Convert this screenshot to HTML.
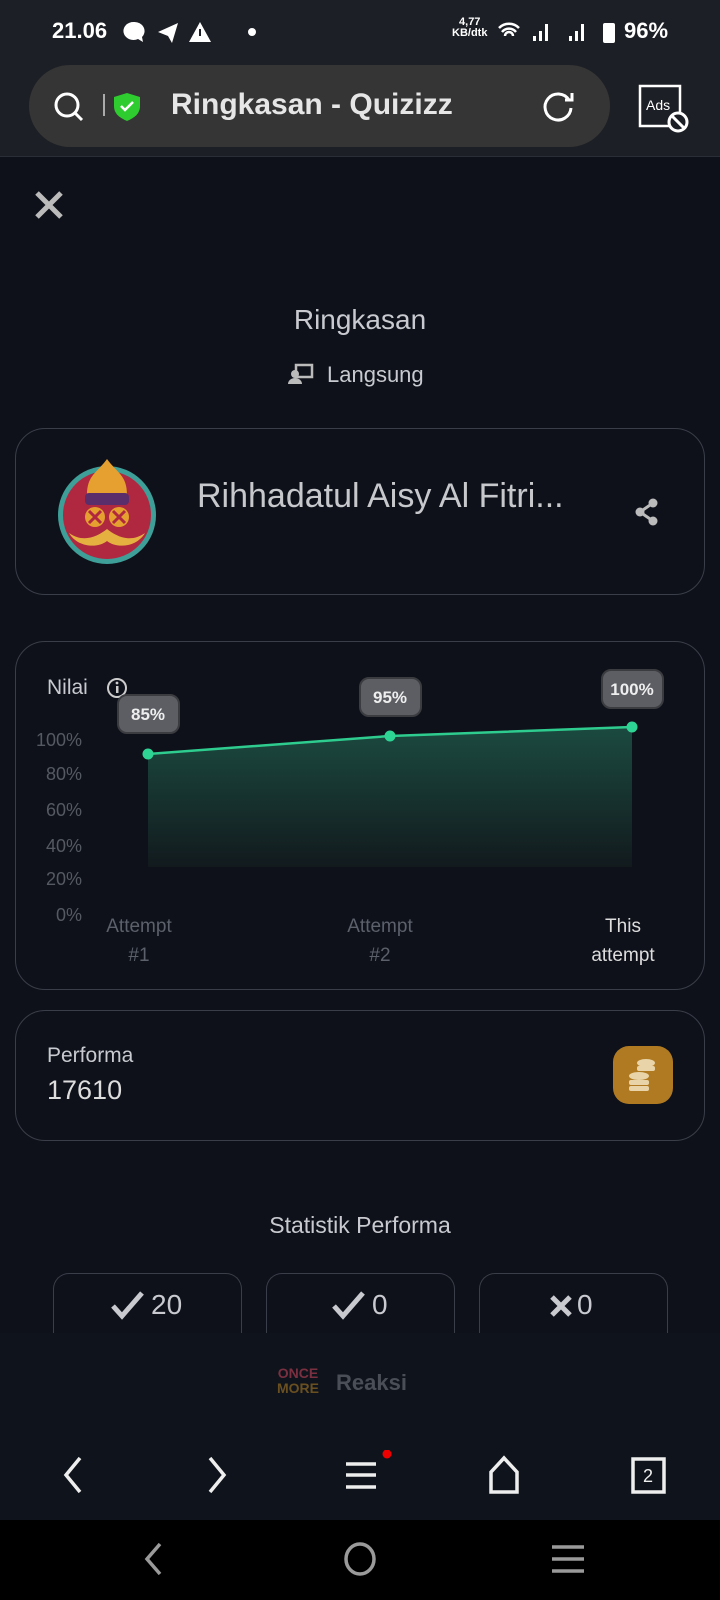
<!DOCTYPE html>
<html><head><meta charset="utf-8"><style>
*{margin:0;padding:0;box-sizing:border-box}
body{width:720px;height:1600px;background:#0e111a;font-family:"Liberation Sans",sans-serif;color:#ddd;position:relative;overflow:hidden}
.a{position:absolute}
.card{position:absolute;border:1.5px solid #3a3e48;border-radius:30px}
.t{color:#c8cad0}
</style></head><body>
<div class="a" style="left:0;top:0;width:720px;height:157px;background:#1c1f25;border-bottom:1px solid #2a2e36"></div>
<div class="a" style="left:52px;top:18px;font-size:22px;font-weight:bold;color:#fff">21.06</div>
<svg class="a" style="left:122px;top:20px" width="140" height="24" viewBox="0 0 140 24">
<path d="M12 2a10 9 0 1 0 4 17l5 3-1-5a10 9 0 0 0-8-15z" fill="#fff"/>
<path d="M36 12l20-9-6 20-4-7z" fill="#fff"/>
<path d="M78 2l11 20H67z" fill="#fff"/><rect x="77" y="9" width="2" height="7" fill="#1c1f25"/>
<circle cx="130" cy="12" r="4" fill="#fff"/></svg>
<div class="a" style="left:452px;top:17px;font-size:11px;font-weight:bold;color:#fff;line-height:11px;text-align:center">4,77<br>KB/dtk</div>
<svg class="a" style="left:497px;top:20px" width="120" height="24" viewBox="0 0 120 24">
<path d="M2 8a14 14 0 0 1 20 0M5 12a9 9 0 0 1 14 0M8 16a4 4 0 0 1 8 0" stroke="#fff" stroke-width="2.5" fill="none"/>
<rect x="36" y="16" width="3" height="5" fill="#fff"/><rect x="42" y="11" width="3" height="10" fill="#fff"/><rect x="48" y="4" width="3" height="17" fill="#fff"/>
<rect x="72" y="16" width="3" height="5" fill="#fff"/><rect x="78" y="11" width="3" height="10" fill="#fff"/><rect x="84" y="4" width="3" height="17" fill="#fff"/>
<rect x="106" y="3" width="12" height="20" rx="2" fill="#fff"/></svg>
<div class="a" style="left:624px;top:18px;font-size:22px;font-weight:bold;color:#fff">96%</div>
<div class="a" style="left:29px;top:65px;width:581px;height:82px;background:#353535;border-radius:41px"></div>
<svg class="a" style="left:52px;top:90px" width="120" height="34" viewBox="0 0 120 34">
<circle cx="15" cy="15" r="11" stroke="#fff" stroke-width="3" fill="none"/><path d="M23 23l7 7" stroke="#fff" stroke-width="3"/>
<rect x="51" y="4" width="2" height="22" fill="#aaa"/>
<path d="M75 3l13 4v9c0 8-6 12-13 15-7-3-13-7-13-15V7z" fill="#2ecc2e"/><path d="M69 16l4 4 8-8" stroke="#fff" stroke-width="2.5" fill="none"/></svg>
<div class="a" style="left:171px;top:88px;font-size:30px;font-weight:bold;color:#e6e6e6">Ringkasan - Quizizz</div>
<svg class="a" style="left:540px;top:88px" width="36" height="36" viewBox="0 0 36 36"><path d="M29 12A13 13 0 1 0 31 20" stroke="#fff" stroke-width="3" fill="none"/><path d="M25 12h7V5" stroke="#fff" stroke-width="3" fill="none"/></svg>
<svg class="a" style="left:638px;top:84px" width="54" height="50" viewBox="0 0 54 50"><rect x="2" y="2" width="40" height="40" stroke="#fff" stroke-width="2.5" fill="none"/><text x="8" y="26" font-size="14" fill="#fff" font-family="Liberation Sans">Ads</text><circle cx="40" cy="38" r="9" stroke="#fff" stroke-width="3" fill="#1c1f25"/><path d="M34 32l12 12" stroke="#fff" stroke-width="3"/></svg>
<svg class="a" style="left:34px;top:190px" width="30" height="30" viewBox="0 0 30 30"><path d="M3 3l24 24M27 3L3 27" stroke="#bbb" stroke-width="5"/></svg>
<div class="a t" style="left:0;width:720px;top:304px;text-align:center;font-size:28px">Ringkasan</div>
<svg class="a" style="left:288px;top:363px" width="26" height="22" viewBox="0 0 26 22"><rect x="8" y="2" width="16" height="12" stroke="#bbb" stroke-width="2.5" fill="none"/><circle cx="7" cy="11" r="4" fill="#bbb"/><path d="M0 21a7 6 0 0 1 14 0z" fill="#bbb"/></svg>
<div class="a t" style="left:327px;top:362px;font-size:22px">Langsung</div>
<div class="card" style="left:15px;top:428px;width:690px;height:167px"></div>
<svg class="a" style="left:57px;top:455px" width="102" height="110" viewBox="0 0 102 110">
<circle cx="50" cy="60" r="49" fill="#3e9e98"/><circle cx="50" cy="60" r="44" fill="#b02840"/>
<path d="M30 40c0-20 10-22 20-36 10 14 20 16 20 36z" fill="#e6a030"/>
<rect x="28" y="38" width="44" height="12" rx="4" fill="#5a2e6a"/>
<circle cx="38" cy="62" r="10" fill="#e6a030"/><circle cx="62" cy="62" r="10" fill="#e6a030"/>
<path d="M32 56l12 12M44 56L32 68M56 56l12 12M68 56L56 68" stroke="#b02840" stroke-width="3"/>
<path d="M12 78c14 10 28 4 38-4 10 8 24 14 38 4-8 14-28 16-38 8-10 8-30 6-38-8z" fill="#e6b040"/></svg>
<div class="a t" style="left:197px;top:477px;font-size:34px;color:#c6c8cc">Rihhadatul Aisy Al Fitri...</div>
<svg class="a" style="left:634px;top:498px" width="26" height="28" viewBox="0 0 26 28"><circle cx="19" cy="5" r="4.5" fill="#bbb"/><circle cx="6" cy="14" r="4.5" fill="#bbb"/><circle cx="19" cy="23" r="4.5" fill="#bbb"/><path d="M19 5L6 14l13 9" stroke="#bbb" stroke-width="3" fill="none"/></svg>
<div class="card" style="left:15px;top:641px;width:690px;height:349px"></div>
<div class="a t" style="left:47px;top:676px;font-size:21px">Nilai</div>
<svg class="a" style="left:106px;top:677px" width="22" height="22" viewBox="0 0 22 22"><circle cx="11" cy="11" r="9" stroke="#ccc" stroke-width="2" fill="none"/><rect x="10" y="9" width="2.5" height="7" fill="#ccc"/><circle cx="11" cy="6" r="1.4" fill="#ccc"/></svg>
<svg class="a" style="left:0;top:660px" width="720" height="330" viewBox="0 660 720 330">
<defs><linearGradient id="g" x1="0" y1="0" x2="0" y2="1"><stop offset="0" stop-color="#1b4a40"/><stop offset="1" stop-color="#121a1e"/></linearGradient></defs>
<path d="M148 754L390 736L632 727V867H148z" fill="url(#g)"/>
<path d="M148 754L390 736L632 727" stroke="#2ecc8e" stroke-width="2.5" fill="none"/>
<circle cx="148" cy="754" r="5.5" fill="#2ed494"/><circle cx="390" cy="736" r="5.5" fill="#2ed494"/><circle cx="632" cy="727" r="5.5" fill="#2ed494"/>
<rect x="118" y="695" width="61" height="38" rx="9" fill="#5c5e64" stroke="#3a3c40" stroke-width="2"/>
<rect x="360" y="678" width="61" height="38" rx="9" fill="#5c5e64" stroke="#3a3c40" stroke-width="2"/>
<rect x="602" y="670" width="61" height="38" rx="9" fill="#5c5e64" stroke="#3a3c40" stroke-width="2"/>
<g font-family="Liberation Sans" font-weight="bold" font-size="17" fill="#eee" text-anchor="middle"><text x="148" y="720">85%</text><text x="390" y="703">95%</text><text x="632" y="695">100%</text></g>
<g font-family="Liberation Sans" font-size="18" fill="#555a62" text-anchor="end"><text x="82" y="746">100%</text><text x="82" y="780">80%</text><text x="82" y="816">60%</text><text x="82" y="852">40%</text><text x="82" y="885">20%</text><text x="82" y="921">0%</text></g>
<g font-family="Liberation Sans" font-size="19" text-anchor="middle"><text x="139" y="932" fill="#5b606a">Attempt</text><text x="139" y="961" fill="#5b606a">#1</text><text x="380" y="932" fill="#5b606a">Attempt</text><text x="380" y="961" fill="#5b606a">#2</text><text x="623" y="932" fill="#ddd">This</text><text x="623" y="961" fill="#ddd">attempt</text></g>
</svg>
<div class="card" style="left:15px;top:1010px;width:690px;height:131px"></div>
<div class="a t" style="left:47px;top:1044px;font-size:21px">Performa</div>
<div class="a t" style="left:47px;top:1075px;font-size:27px;color:#ddd">17610</div>
<div class="a" style="left:613px;top:1046px;width:60px;height:58px;border-radius:16px;background:#b07a22"></div>
<svg class="a" style="left:626px;top:1057px" width="36" height="36" viewBox="0 0 36 36" fill="#e8d4a8"><ellipse cx="20" cy="6" rx="9" ry="4"/><rect x="11" y="9" width="18" height="5" rx="2"/><ellipse cx="13" cy="19" rx="10" ry="4"/><rect x="3" y="23" width="20" height="5" rx="2"/><rect x="3" y="29" width="20" height="5" rx="2"/></svg>
<div class="a t" style="left:0;width:720px;top:1212px;text-align:center;font-size:23px">Statistik Performa</div>
<div class="a" style="left:53px;top:1273px;width:189px;height:70px;border:1.5px solid #3a3e48;border-radius:16px 16px 0 0;border-bottom:none"></div>
<div class="a" style="left:266px;top:1273px;width:189px;height:70px;border:1.5px solid #3a3e48;border-radius:16px 16px 0 0;border-bottom:none"></div>
<div class="a" style="left:479px;top:1273px;width:189px;height:70px;border:1.5px solid #3a3e48;border-radius:16px 16px 0 0;border-bottom:none"></div>
<svg class="a" style="left:110px;top:1290px" width="36" height="30" viewBox="0 0 36 30"><path d="M3 16l9 10L32 3" stroke="#c8cad0" stroke-width="5" fill="none"/></svg>
<div class="a t" style="left:151px;top:1289px;font-size:28px">20</div>
<svg class="a" style="left:331px;top:1290px" width="36" height="30" viewBox="0 0 36 30"><path d="M3 16l9 10L32 3" stroke="#c8cad0" stroke-width="5" fill="none"/></svg>
<div class="a t" style="left:372px;top:1289px;font-size:28px">0</div>
<svg class="a" style="left:549px;top:1294px" width="24" height="24" viewBox="0 0 24 24"><path d="M3 3l18 18M21 3L3 21" stroke="#c8cad0" stroke-width="5"/></svg>
<div class="a t" style="left:577px;top:1289px;font-size:28px">0</div>
<div class="a" style="left:0;top:1333px;width:720px;height:95px;background:#0f131b"></div>
<div class="a" style="left:276px;top:1366px;font-size:14px;font-weight:bold;line-height:15px;width:44px;text-align:center"><span style="color:#7a3040">ONCE</span><br><span style="color:#6a5020">MORE</span></div>
<div class="a" style="left:336px;top:1370px;font-size:22px;font-weight:bold;color:#4a4e56">Reaksi</div>
<div class="a" style="left:0;top:1428px;width:720px;height:92px;background:#0f131b"></div>
<svg class="a" style="left:0;top:1450px" width="720" height="50" viewBox="0 0 720 50" stroke="#eee" stroke-width="3.5" fill="none">
<path d="M80 8L66 25l14 17"/><path d="M210 8l14 17-14 17"/>
<path d="M346 14h30M346 25h30M346 37h30"/><circle cx="387" cy="4" r="4.5" fill="#e00" stroke="none"/>
<path d="M491 42V22l13-14 13 14v20z"/><rect x="633" y="9" width="31" height="33" stroke-width="3.5"/>
<text x="648" y="32" font-size="18" fill="#eee" stroke="none" text-anchor="middle" font-family="Liberation Sans">2</text></svg>
<div class="a" style="left:0;top:1520px;width:720px;height:80px;background:#000"></div>
<svg class="a" style="left:0;top:1538px" width="720" height="44" viewBox="0 0 720 44" stroke="#9a9a9a" stroke-width="3.5" fill="none">
<path d="M160 6l-13 15 13 15"/><ellipse cx="360" cy="21" rx="14" ry="15"/><path d="M552 9h32M552 21h32M552 33h32"/></svg>
</body></html>
